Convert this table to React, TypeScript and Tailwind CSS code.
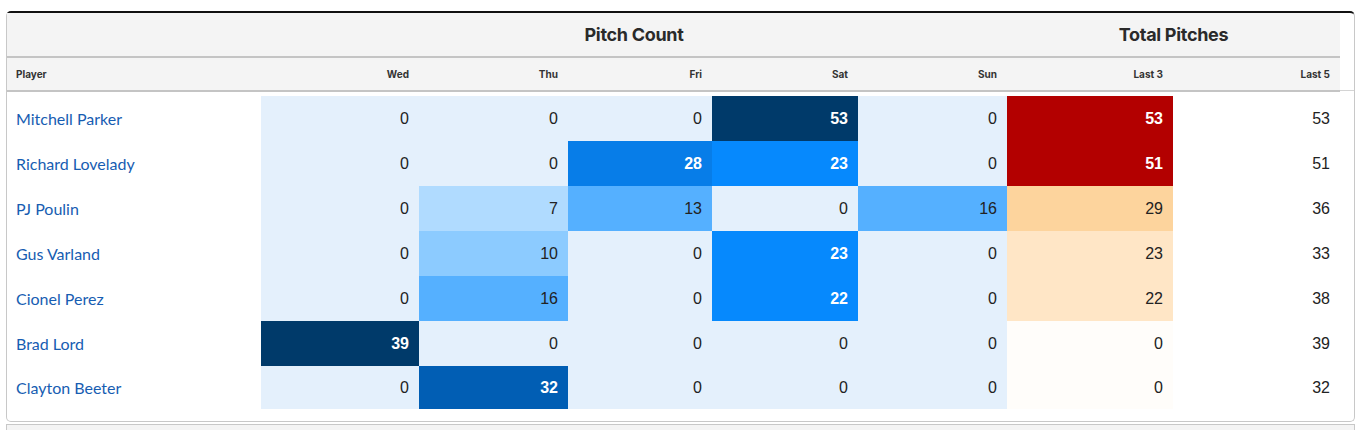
import React from 'react'

type Row = { name: string; days: number[]; last3: number; last5: number }

const rows: Row[] = [
  { name: 'Mitchell Parker', days: [0, 0, 0, 53, 0], last3: 53, last5: 53 },
  { name: 'Richard Lovelady', days: [0, 0, 28, 23, 0], last3: 51, last5: 51 },
  { name: 'PJ Poulin', days: [0, 7, 13, 0, 16], last3: 29, last5: 36 },
  { name: 'Gus Varland', days: [0, 10, 0, 23, 0], last3: 23, last5: 33 },
  { name: 'Cionel Perez', days: [0, 16, 0, 22, 0], last3: 22, last5: 38 },
  { name: 'Brad Lord', days: [39, 0, 0, 0, 0], last3: 0, last5: 39 },
  { name: 'Clayton Beeter', days: [0, 32, 0, 0, 0], last3: 0, last5: 32 },
]

const dayWidths = ['w-[158px]', 'w-[149px]', 'w-[144px]', 'w-[146px]', 'w-[149px]']
const dayLabels = ['Wed', 'Thu', 'Fri', 'Sat', 'Sun']

// heat scale for the daily counts
const blue = (v: number) => {
  if (v >= 39) return 'bg-[#003a6a] text-white font-bold'
  if (v >= 30) return 'bg-[#015eb4] text-white font-bold'
  if (v >= 25) return 'bg-[#077de8] text-white font-bold'
  if (v >= 20) return 'bg-[#0689fd] text-white font-bold'
  if (v >= 12) return 'bg-[#55b0ff] text-[#222]'
  if (v >= 9) return 'bg-[#8ccbff] text-[#222]'
  if (v >= 1) return 'bg-[#b0dbff] text-[#222]'
  return 'bg-[#e4f0fc] text-[#222]'
}

const red = (v: number) => {
  if (v >= 40) return 'bg-[#b30000] text-white font-bold'
  if (v >= 25) return 'bg-[#fdd49d] text-[#222]'
  if (v >= 1) return 'bg-[#ffe6c6] text-[#222]'
  return 'bg-[#fffdfa] text-[#222]'
}

const num = "font-['Liberation_Sans',Arial,sans-serif] text-[16px] text-right pr-[10px] flex items-center justify-end"

export default function App() {
  return (
    <div className="bg-white min-h-screen pt-[11px] px-[6px] font-['Lato',sans-serif]">
      <div className="w-[1349px] border border-[#c8c8c8] border-t-2 border-t-[#111] rounded-[5px] flex pb-[12px]">
        <div className="w-[1333px] shrink-0">
          {/* header */}
          <div className="bg-[#f4f4f4] font-['Inter',sans-serif]">
            <div className="flex h-[45px] border-b-2 border-[#c4c4c4] text-[#2a2a2a] text-[18px] font-bold tracking-[-0.3px]">
              <div className="w-[254px]" />
              <div className="w-[746px] flex items-center justify-center">Pitch Count</div>
              <div className="w-[333px] flex items-center justify-center">Total Pitches</div>
            </div>
            <div className="flex h-[34px] border-b-2 border-[#c4c4c4] text-[10px] font-bold text-[#333]">
              <div className="w-[254px] pl-[9px] flex items-center">Player</div>
              {dayLabels.map((d, i) => (
                <div key={d} className={`${dayWidths[i]} pr-[10px] flex items-center justify-end`}>{d}</div>
              ))}
              <div className="w-[166px] pr-[10px] flex items-center justify-end">Last 3</div>
              <div className="w-[167px] pr-[10px] flex items-center justify-end">Last 5</div>
            </div>
          </div>

          {/* body */}
          <div className="pt-[4px]">
            {rows.map((r, idx) => (
              <div key={r.name} className={`flex ${idx === rows.length - 1 ? 'h-[43px]' : 'h-[45px]'}`}>
                <div className="w-[254px] pl-[9px] flex items-center text-[16px] text-[#175db2]">{r.name}</div>
                {r.days.map((v, i) => (
                  <div key={i} className={`${dayWidths[i]} ${num} ${blue(v)}`}>{v}</div>
                ))}
                <div className={`w-[166px] ${num} ${red(r.last3)}`}>{r.last3}</div>
                <div className={`w-[167px] ${num} text-[#222]`}>{r.last5}</div>
              </div>
            ))}
          </div>
        </div>
        <div className="flex-1">
          <div className="h-[78px] border-b border-[#d4d4d4]" />
        </div>
      </div>
      <div className="w-[1349px] mt-[2px] h-[20px] border-l border-t border-r border-[#c8c8c8] bg-[#f4f4f4]" />
    </div>
  )
}
